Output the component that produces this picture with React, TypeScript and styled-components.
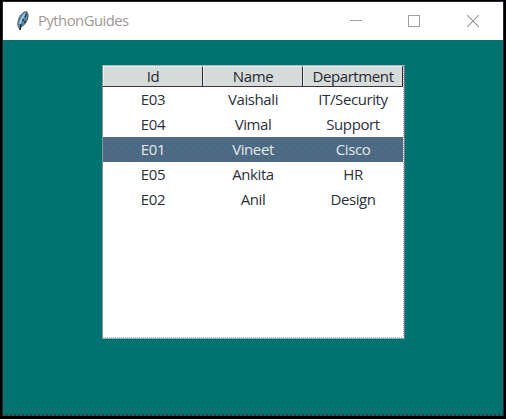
import React from 'react';
import styled, { createGlobalStyle } from 'styled-components';

const GlobalStyle = createGlobalStyle`
  * { box-sizing: border-box; }
  body { margin: 0; background: #000; overflow: hidden; }
`;

const Desktop = styled.div`
  width: 506px;
  height: 419px;
  padding: 1px 2px 3px 2px;
  background: #000;
  font-family: 'Open Sans', 'Noto Sans', sans-serif;
`;

const Window = styled.main`
  display: flex;
  flex-direction: column;
  width: 502px;
  height: 415px;
  border: 1px solid #2c2630;
  border-bottom: 2px dotted #423843;
  background: #007371;
`;

const TitleBar = styled.header`
  display: flex;
  align-items: center;
  flex: 0 0 38px;
  height: 38px;
  padding: 0 1px 0 12px;
  background: #fff;
`;

const Title = styled.h1`
  flex: 1;
  margin: 0 0 0 7px;
  padding-bottom: 2px;
  color: #9d9994;
  font-size: 14.8px;
  font-weight: 400;
  line-height: 36px;
  letter-spacing: -0.5px;
`;

const WindowButton = styled.button`
  display: flex;
  align-items: center;
  justify-content: center;
  width: 58.5px;
  height: 38px;
  padding: 0;
  border: 0;
  background: transparent;
`;

const Content = styled.section`
  flex: 1;
  padding: 25px 0 0 99px;
`;

const Table = styled.div`
  width: 303px;
  height: 274px;
  border: 1px solid #a7b9bd;
  border-left-color: #809697;
  border-right-color: #647a92;
  border-bottom-color: #88adc2;
  background: #fff;
`;

const TableBody = styled.div`
  height: 272px;
  border-right: 1px dotted #aaa;
  border-bottom: 1px dotted #bbb;
`;

const Row = styled.div<{ $selected?: boolean }>`
  display: grid;
  grid-template-columns: 100px 100px 100px;
  height: 25px;
  color: ${({ $selected }) => ($selected ? '#e3e9e5' : '#2b303b')};
  background-color: ${({ $selected }) => ($selected ? '#506985' : '#fff')};
  background-image: ${({ $selected }) =>
    $selected
      ? 'linear-gradient(#087377, #087377), linear-gradient(#506985, #506985), conic-gradient(from 270deg at 1px 1px, #087377 90deg, transparent 0), conic-gradient(from 270deg at 1px 1px, #087377 90deg, transparent 0)'
      : 'none'};
  background-size: 0 0, 100% 2px, 8px 6px, 8px 6px;
  background-position: 0 0, 0 0, 2px 2px, 6px 5px;
  background-repeat: no-repeat, no-repeat, repeat, repeat;
`;

const HeaderRow = styled(Row)`
  height: 21px;
  border-bottom: 1px solid #3b3440;
  color: #242733;
  background: #d6dcd9;
`;

const Cell = styled.div`
  font-size: 15px;
  line-height: 25px;
  text-align: center;
  white-space: nowrap;
  letter-spacing: -0.4px;
`;

const HeaderCell = styled(Cell)`
  height: 20px;
  line-height: 18px;
  border-top: 1px dotted #fff;
  border-left: 1px dotted #fff;
  border-right: 1px solid #302630;
`;

const columns = ['Id', 'Name', 'Department'];
const records = [
  ['E03', 'Vaishali', 'IT/Security'],
  ['E04', 'Vimal', 'Support'],
  ['E01', 'Vineet', 'Cisco'],
  ['E05', 'Ankita', 'HR'],
  ['E02', 'Anil', 'Design'],
];

const FeatherIcon = () => (
  <svg width="16" height="20" viewBox="0 0 16 20" aria-hidden="true">
    <path d="M11.5.5C8 1 5 4 3.700 8c-.9 2.500-1.200 5-.5 7.500L5 19l1-3c4-2 6.500-6 7-10 .3-2 0-4-1.500-5.500Z" fill="#5389aa" stroke="#59616a" strokeWidth="1" />
    <path d="M10.500 2.500C7.500 5.500 6 9 4.700 13" fill="none" stroke="#9fc7dc" strokeWidth="2" />
    <path d="M11.500 2.500 10 6M8.500 8l-1 2M6 13 5 19M10.500 10 9 12" fill="none" stroke="#20232d" strokeWidth="1.200" />
  </svg>
);

export default function App() {
  return (
    <>
      <GlobalStyle />
      <Desktop>
        <Window>
          <TitleBar>
            <FeatherIcon />
            <Title>PythonGuides</Title>
            <WindowButton aria-label="Minimize">
              <svg width="12" height="12"><path d="M0 5.500h12" stroke="#aaa09a" /></svg>
            </WindowButton>
            <WindowButton aria-label="Maximize">
              <svg width="12" height="12"><rect x=".5" y=".5" width="11" height="11" fill="none" stroke="#a39e9c" /></svg>
            </WindowButton>
            <WindowButton aria-label="Close">
              <svg width="12" height="12"><path d="m0 0 12 12M12 0 0 12" stroke="#969696" strokeWidth="1.1" /></svg>
            </WindowButton>
          </TitleBar>
          <Content>
            <Table role="table">
              <TableBody>
                <HeaderRow role="row">
                  {columns.map((name) => <HeaderCell key={name} role="columnheader">{name}</HeaderCell>)}
                </HeaderRow>
                {records.map((record, index) => (
                  <Row key={record[0]} $selected={index === 2} role="row">
                    {record.map((value) => <Cell key={value} role="cell">{value}</Cell>)}
                  </Row>
                ))}
              </TableBody>
            </Table>
          </Content>
        </Window>
      </Desktop>
    </>
  );
}
